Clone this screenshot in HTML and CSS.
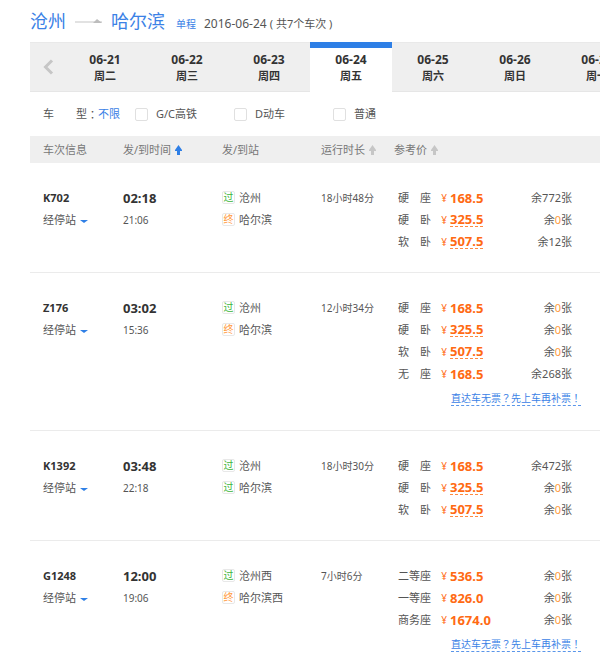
FILE: index.html
```html
<!DOCTYPE html>
<html lang="zh-CN">
<head>
<meta charset="utf-8">
<meta name="viewport" content="width=device-width, initial-scale=1">
<title>沧州 - 哈尔滨 车次</title>
<link rel="stylesheet" href="styles.css">
</head>
<body>
<main class="page">
  <header class="route">
    <h1 class="route-name">沧州
      <svg class="route-arrow" width="27" height="6" viewBox="0 0 27 6" aria-hidden="true"><path d="M0 3h27v2H0z" fill="#e2e2e2"/><path d="M18 5l4-4 5 4z" fill="#bdbdbd"/></svg>
      哈尔滨</h1>
    <span class="route-type">单程</span>
    <span class="route-date">2016-06-24 <span class="route-count">( 共7个车次 )</span></span>
  </header>

  <nav class="dates" aria-label="日期">
    <button class="prev" type="button" aria-label="前一天"><svg width="12" height="16" viewBox="0 0 12 16"><path d="M10 1.500L3.500 8l6.500 6.500" fill="none" stroke="#c6c6c6" stroke-width="3"/></svg></button>
    <a class="date" href="#"><span class="day">06-21</span><br>周二</a>
    <a class="date" href="#"><span class="day">06-22</span><br>周三</a>
    <a class="date" href="#"><span class="day">06-23</span><br>周四</a>
    <a class="date active" href="#" aria-current="date"><span class="day">06-24</span><br>周五</a>
    <a class="date" href="#"><span class="day">06-25</span><br>周六</a>
    <a class="date" href="#"><span class="day">06-26</span><br>周日</a>
    <a class="date" href="#"><span class="day">06-27</span><br>周一</a>
  </nav>

  <div class="filter">
    <span class="filter-name"><span>车</span><span>型</span></span><span class="punct colon">：</span><a class="any" href="#">不限</a>
    <div class="options">
      <label class="option"><input type="checkbox">G/C高铁</label>
      <label class="option"><input type="checkbox">D动车</label>
      <label class="option"><input type="checkbox">普通</label>
    </div>
  </div>

  <table class="trains">
    <colgroup><col class="c-train"><col class="c-time"><col class="c-station"><col class="c-span"><col></colgroup>
    <thead>
      <tr>
        <th class="first">车次信息</th>
        <th><button class="sort on" type="button">发/到时间<svg width="7" height="10" viewBox="0 0 7 10"><path d="M3.500 0L7 5v1H5v4H2V6H0V5z"/></svg></button></th>
        <th>发/到站</th>
        <th><button class="sort" type="button">运行时长<svg width="7" height="10" viewBox="0 0 7 10"><path d="M3.500 0L7 5v1H5v4H2V6H0V5z"/></svg></button></th>
        <th><button class="sort" type="button">参考价<svg width="7" height="10" viewBox="0 0 7 10"><path d="M3.500 0L7 5v1H5v4H2V6H0V5z"/></svg></button></th>
      </tr>
    </thead>
    <tbody>
      <tr>
        <td class="first"><div class="code">K702</div><button class="stops" type="button">经停站</button></td>
        <td><div class="depart">02:18</div><div class="arrive">21:06</div></td>
        <td><div class="station"><i class="badge pass">过</i>沧州</div><div class="station"><i class="badge end">终</i>哈尔滨</div></td>
        <td class="span">18小时48分</td>
        <td class="fares">
          <div class="fare"><span class="seat"><span>硬</span><span>座</span></span><span class="yen">¥</span><span><b class="price">168.5</b></span><span class="left">余772张</span></div>
          <div class="fare"><span class="seat"><span>硬</span><span>卧</span></span><span class="yen">¥</span><span><b class="price dash">325.5</b></span><span class="left">余<em>0</em>张</span></div>
          <div class="fare"><span class="seat"><span>软</span><span>卧</span></span><span class="yen">¥</span><span><b class="price dash">507.5</b></span><span class="left">余12张</span></div>
        </td>
      </tr>
      <tr>
        <td class="first"><div class="code">Z176</div><button class="stops" type="button">经停站</button></td>
        <td><div class="depart">03:02</div><div class="arrive">15:36</div></td>
        <td><div class="station"><i class="badge pass">过</i>沧州</div><div class="station"><i class="badge end">终</i>哈尔滨</div></td>
        <td class="span">12小时34分</td>
        <td class="fares">
          <div class="fare"><span class="seat"><span>硬</span><span>座</span></span><span class="yen">¥</span><span><b class="price">168.5</b></span><span class="left">余<em>0</em>张</span></div>
          <div class="fare"><span class="seat"><span>硬</span><span>卧</span></span><span class="yen">¥</span><span><b class="price dash">325.5</b></span><span class="left">余<em>0</em>张</span></div>
          <div class="fare"><span class="seat"><span>软</span><span>卧</span></span><span class="yen">¥</span><span><b class="price dash">507.5</b></span><span class="left">余<em>0</em>张</span></div>
          <div class="fare"><span class="seat"><span>无</span><span>座</span></span><span class="yen">¥</span><span><b class="price">168.5</b></span><span class="left">余268张</span></div>
          <div class="tip"><a href="#">直达车无票<span class="punct" lang="zh-TW">？</span>先上车再补票<span class="punct" lang="zh-TW">！</span></a></div>
        </td>
      </tr>
      <tr>
        <td class="first"><div class="code">K1392</div><button class="stops" type="button">经停站</button></td>
        <td><div class="depart">03:48</div><div class="arrive">22:18</div></td>
        <td><div class="station"><i class="badge pass">过</i>沧州</div><div class="station"><i class="badge pass">过</i>哈尔滨</div></td>
        <td class="span">18小时30分</td>
        <td class="fares">
          <div class="fare"><span class="seat"><span>硬</span><span>座</span></span><span class="yen">¥</span><span><b class="price">168.5</b></span><span class="left">余472张</span></div>
          <div class="fare"><span class="seat"><span>硬</span><span>卧</span></span><span class="yen">¥</span><span><b class="price dash">325.5</b></span><span class="left">余<em>0</em>张</span></div>
          <div class="fare"><span class="seat"><span>软</span><span>卧</span></span><span class="yen">¥</span><span><b class="price dash">507.5</b></span><span class="left">余<em>0</em>张</span></div>
        </td>
      </tr>
      <tr>
        <td class="first"><div class="code">G1248</div><button class="stops" type="button">经停站</button></td>
        <td><div class="depart">12:00</div><div class="arrive">19:06</div></td>
        <td><div class="station"><i class="badge pass">过</i>沧州西</div><div class="station"><i class="badge end">终</i>哈尔滨西</div></td>
        <td class="span">7小时6分</td>
        <td class="fares">
          <div class="fare"><span class="seat">二等座</span><span class="yen">¥</span><span><b class="price">536.5</b></span><span class="left">余<em>0</em>张</span></div>
          <div class="fare"><span class="seat">一等座</span><span class="yen">¥</span><span><b class="price">826.0</b></span><span class="left">余<em>0</em>张</span></div>
          <div class="fare"><span class="seat">商务座</span><span class="yen">¥</span><span><b class="price">1674.0</b></span><span class="left">余<em>0</em>张</span></div>
          <div class="tip"><a href="#">直达车无票<span class="punct" lang="zh-TW">？</span>先上车再补票<span class="punct" lang="zh-TW">！</span></a></div>
        </td>
      </tr>
    </tbody>
  </table>
</main>
</body>
</html>
```
FILE: styles.css
```css
* { box-sizing: border-box; }
body {
  margin: 0;
  background: #fff;
  color: #555;
  font: 11px/22px "Noto Sans", "Noto Sans CJK SC", sans-serif;
}
a { color: #3b82e6; text-decoration: none; }
button {
  padding: 0;
  border: 0;
  background: none;
  color: inherit;
  font: inherit;
  cursor: pointer;
}
.page { padding-left: 30px; overflow: hidden; }
.punct { font-family: "Noto Sans CJK TC", sans-serif; }

.route {
  display: flex;
  align-items: baseline;
  height: 42px;
  padding-top: 9px;
}
.route-name {
  display: flex;
  align-items: center;
  gap: 9px;
  margin: 0;
  color: #3b82e6;
  font-size: 18px;
  font-weight: 400;
  line-height: 24px;
}
.route-type { margin-left: 11px; color: #3b82e6; font-size: 10px; }
.route-date { margin-left: 8px; font-size: 12px; }
.route-count { font-size: 11px; }

.dates {
  display: flex;
  height: 50px;
  border-top: 1px solid #e9e9e9;
  border-bottom: 1px solid #e6e6e6;
  background: #efefef;
}
.prev {
  display: flex;
  flex: 0 0 34px;
  align-items: center;
  padding-left: 12px;
}
.date {
  flex: 0 0 82px;
  padding-top: 9px;
  color: #333;
  font-weight: 700;
  line-height: 16px;
  text-align: center;
}
.day { font-size: 12px; }
.date.active {
  height: 50px;
  margin-top: -1px;
  padding-top: 4px;
  border-top: 6px solid #2e7fe6;
  background: #fff;
}

.filter {
  display: flex;
  align-items: center;
  height: 44px;
  padding-left: 13px;
}
.filter-name { display: flex; justify-content: space-between; width: 44px; }
.colon { width: 11px; }
.options { display: grid; grid-template-columns: repeat(3, 99px); margin-left: 15px; }
.option { display: flex; align-items: center; gap: 8px; }
.option input {
  width: 13px;
  height: 13px;
  margin: 0;
  appearance: none;
  border: 1px solid #e0e0e0;
  border-radius: 2px;
  background: #fff;
}

.trains { width: 100%; border-collapse: collapse; table-layout: fixed; }
.c-train { width: 93px; }
.c-time, .c-station { width: 99px; }
.c-span { width: 73px; }
th {
  height: 27px;
  padding: 0;
  background: #efefef;
  color: #777;
  font-weight: 400;
  text-align: left;
}
td { padding: 24px 0 19px; border-bottom: 1px solid #ebebeb; vertical-align: top; }
tbody tr:last-child td { padding-bottom: 0; border-bottom: 0; }
.first { padding-left: 13px; }
.sort { display: flex; align-items: center; gap: 4px; white-space: nowrap; }
.sort svg { fill: #c6c6c6; }
.sort.on svg { fill: #2e7fe6; }

.code { color: #333; font-weight: 700; }
.stops { display: flex; align-items: center; gap: 4px; }
.stops::after {
  margin-top: 3px;
  border: 4px solid transparent;
  border-top: 3px solid #2e7fe6;
  border-bottom: 0;
  content: "";
}
.depart { color: #333; font-size: 13px; font-weight: 700; }
.arrive, .span { font-size: 10px; }
.station { display: flex; align-items: center; gap: 4px; }
.badge {
  width: 13px;
  height: 13px;
  margin-bottom: 2px;
  border: 1px solid #e8e8e8;
  border-radius: 2px;
  font-size: 10px;
  font-style: normal;
  line-height: 11px;
  text-align: center;
}
.pass { color: #3cb53c; }
.end { color: #ff9a3c; }

.fares { padding-left: 4px; }
.fare {
  display: grid;
  grid-template-columns: 33px 16px 1fr auto;
  height: 22px;
  padding-right: 28px;
}
.seat { display: flex; justify-content: space-between; }
.yen { color: #ff6a13; font-size: 10px; text-align: right; }
.price { margin-left: 3px; color: #ff6a13; font-size: 13px; }
.dash { display: inline-block; border-bottom: 1px dashed #ff8a42; line-height: 14px; }
.left em { color: #ff9a3c; font-style: normal; }
.tip { height: 26px; padding: 2px 0 0 53px; white-space: nowrap; }
.tip a {
  display: inline-block;
  border-bottom: 1px dashed #5a96ea;
  font-size: 10px;
  line-height: 14px;
}
```
